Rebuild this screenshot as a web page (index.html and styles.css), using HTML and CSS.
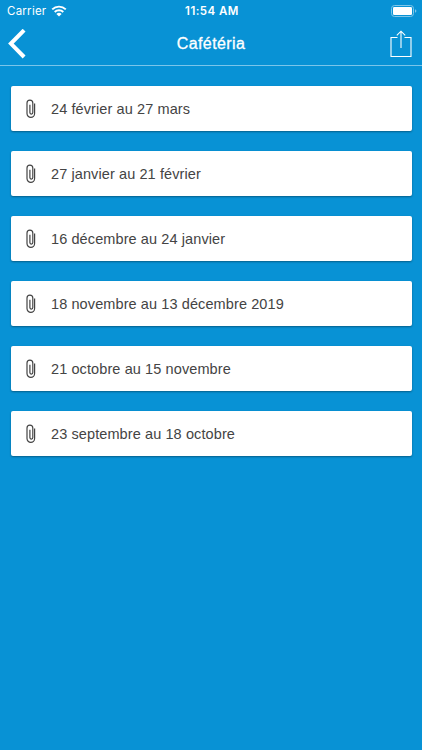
FILE: index.html
```html
<!DOCTYPE html>
<html lang="fr">
<head>
    <meta charset="UTF-8">
    <title>Cafétéria</title>
    <link rel="stylesheet" href="styles.css">
</head>
<body>
    <svg class="sprite" width="0" height="0">
        <symbol id="clip" viewBox="0 0 10 20">
            <path d="M8.6 4.6V14.6a3.8 3.8 0 0 1-7.6 0V4.1a2.9 2.9 0 0 1 5.8 0V13.6a1.45 1.45 0 0 1-2.9 0V5.8"/>
        </symbol>
    </svg>
    <div class="status">
        <div class="network">
            <span class="carrier">Carrier</span>
            <svg class="wifi" width="16" height="12" viewBox="0 0 16 12">
                <path class="wave" d="M1.2 4.4a9.7 9.7 0 0 1 13.6 0M3.7 7a6.1 6.1 0 0 1 8.6 0"/>
                <path class="dot" d="M5.4 9a3.7 3.7 0 0 1 5.2 0L8 11.6z"/>
            </svg>
        </div>
        <span class="time">11:54 AM</span>
        <svg class="battery" width="26" height="12" viewBox="0 0 26 12">
            <rect class="shell" x="0.5" y="0.5" width="22" height="11" rx="3"/>
            <rect class="level" x="2" y="2" width="19" height="8" rx="1.3"/>
            <path class="tip" d="M24 4.2q1.4.6 1.4 1.8T24 7.8z"/>
        </svg>
    </div>
    <div class="navbar">
        <svg class="back" width="20" height="30" viewBox="0 0 20 30">
            <path d="M15.7 2.6L3.9 14.6L15.7 26.6"/>
        </svg>
        <h1 class="title">Cafétéria</h1>
        <svg class="share" width="22" height="28" viewBox="0 0 22 28">
            <path d="M7.5 7.5H1V26.5H21V7.5H14.5M11 18V1.2M6.8 5.3L11 1.2L15.2 5.3"/>
        </svg>
    </div>
    <ul class="list">
        <li class="card"><svg class="clip"><use href="#clip"/></svg><span class="label">24 février au 27 mars</span></li>
        <li class="card"><svg class="clip"><use href="#clip"/></svg><span class="label">27 janvier au 21 février</span></li>
        <li class="card"><svg class="clip"><use href="#clip"/></svg><span class="label">16 décembre au 24 janvier</span></li>
        <li class="card"><svg class="clip"><use href="#clip"/></svg><span class="label">18 novembre au 13 décembre 2019</span></li>
        <li class="card"><svg class="clip"><use href="#clip"/></svg><span class="label">21 octobre au 15 novembre</span></li>
        <li class="card"><svg class="clip"><use href="#clip"/></svg><span class="label">23 septembre au 18 octobre</span></li>
    </ul>
</body>
</html>
```
FILE: styles.css
```css
* {
    box-sizing: border-box;
    margin: 0;
    padding: 0;
}
body {
    min-height: 100vh;
    background-color: #0892d5;
    color: #fff;
    font-family: "Liberation Sans", Arial, sans-serif;
}
svg {
    display: block;
    fill: none;
}
.sprite {
    height: 0;
}
.status {
    display: grid;
    grid-template-columns: 1fr auto 1fr;
    align-items: center;
    height: 22px;
    padding: 0 5px 0 7px;
    font-family: Inter, sans-serif;
    font-size: 11.5px;
}
.network {
    display: flex;
    align-items: center;
    gap: 5px;
}
.carrier {
    letter-spacing: 0.25px;
}
.wave {
    stroke: #fff;
    stroke-width: 1.9;
}
.dot,
.level {
    fill: #fff;
}
.time {
    font-size: 11.5px;
    font-weight: 600;
    letter-spacing: 0.45px;
}
.battery {
    justify-self: end;
}
.shell {
    stroke: #7fc6e9;
}
.tip {
    fill: #7fc6e9;
}
.navbar {
    display: grid;
    grid-template-columns: 1fr auto 1fr;
    align-items: center;
    height: 44px;
    padding: 0 10px;
    border-bottom: 1px solid #7ac5ea;
}
.back {
    margin-left: -3px;
    stroke: #fff;
    stroke-width: 4;
    stroke-linecap: square;
}
.title {
    font-size: 16px;
    font-weight: normal;
    letter-spacing: 0.4px;
    -webkit-text-stroke: 0.3px #fff;
}
.share {
    justify-self: end;
    stroke: #fff;
    stroke-width: 1.1;
}
.list {
    display: flex;
    flex-direction: column;
    gap: 20.1px;
    padding: 20px 10.5px;
    list-style: none;
}
.card {
    display: flex;
    align-items: center;
    height: 45px;
    padding-left: 15px;
    border-radius: 2px;
    background-color: #fff;
    box-shadow: 0 1px 2px rgba(0, 0, 0, 0.35);
    color: #444;
}
.clip {
    width: 10px;
    height: 20px;
    margin-right: 15.5px;
    stroke: #444;
    stroke-width: 1.2;
}
.label {
    font-size: 14.5px;
    letter-spacing: 0.1px;
}
```
